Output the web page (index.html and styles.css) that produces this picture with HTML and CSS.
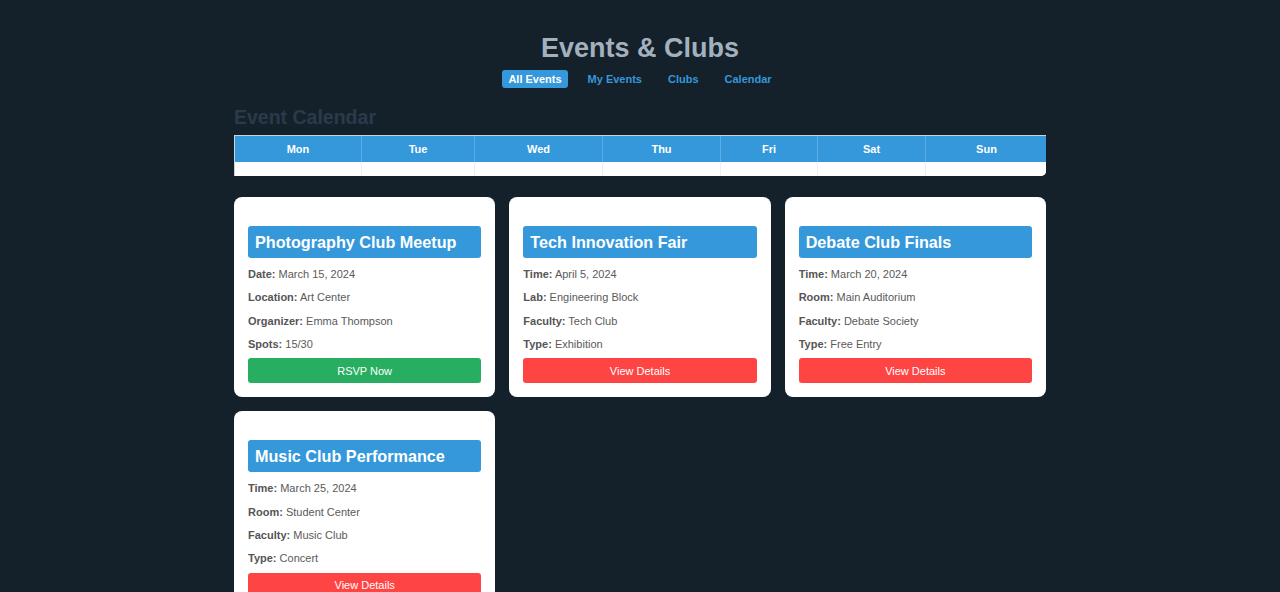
FILE: index.html
```html
<!DOCTYPE html>
<html lang="en">
<head>
<meta charset="utf-8">
<title>Events &amp; Clubs</title>
<link rel="stylesheet" href="styles.css">
</head>
<body>
<div class="page">
  <header class="header">
    <h1 class="title">Events &amp; Clubs</h1>
    <nav class="nav">
      <a class="nav-link active" href="#">All Events</a>
      <a class="nav-link" href="#">My Events</a>
      <a class="nav-link" href="#">Clubs</a>
      <a class="nav-link" href="#">Calendar</a>
    </nav>
  </header>

  <h2 class="section-title">Event Calendar</h2>
  <div class="calendar">
    <div class="cal-head">Mon</div>
    <div class="cal-head">Tue</div>
    <div class="cal-head">Wed</div>
    <div class="cal-head">Thu</div>
    <div class="cal-head">Fri</div>
    <div class="cal-head">Sat</div>
    <div class="cal-head no-sep">Sun</div>
    <div class="cal-cell first"></div>
    <div class="cal-cell"></div>
    <div class="cal-cell"></div>
    <div class="cal-cell"></div>
    <div class="cal-cell"></div>
    <div class="cal-cell"></div>
    <div class="cal-cell no-sep"></div>
  </div>

  <div class="cards">
    <div class="card">
      <h3 class="card-title">Photography Club Meetup</h3>
      <p class="info"><strong>Date:</strong> March 15, 2024</p>
      <p class="info"><strong>Location:</strong> Art Center</p>
      <p class="info"><strong>Organizer:</strong> Emma Thompson</p>
      <p class="info"><strong>Spots:</strong> 15/30</p>
      <button class="btn btn-green">RSVP Now</button>
    </div>
    <div class="card">
      <h3 class="card-title">Tech Innovation Fair</h3>
      <p class="info"><strong>Time:</strong> April 5, 2024</p>
      <p class="info"><strong>Lab:</strong> Engineering Block</p>
      <p class="info"><strong>Faculty:</strong> Tech Club</p>
      <p class="info"><strong>Type:</strong> Exhibition</p>
      <button class="btn btn-red">View Details</button>
    </div>
    <div class="card">
      <h3 class="card-title">Debate Club Finals</h3>
      <p class="info"><strong>Time:</strong> March 20, 2024</p>
      <p class="info"><strong>Room:</strong> Main Auditorium</p>
      <p class="info"><strong>Faculty:</strong> Debate Society</p>
      <p class="info"><strong>Type:</strong> Free Entry</p>
      <button class="btn btn-red">View Details</button>
    </div>
    <div class="card">
      <h3 class="card-title">Music Club Performance</h3>
      <p class="info"><strong>Time:</strong> March 25, 2024</p>
      <p class="info"><strong>Room:</strong> Student Center</p>
      <p class="info"><strong>Faculty:</strong> Music Club</p>
      <p class="info"><strong>Type:</strong> Concert</p>
      <button class="btn btn-red">View Details</button>
    </div>
  </div>
</div>
</body>
</html>
```

FILE: styles.css
```css
* {
  box-sizing: border-box;
}

html, body {
  margin: 0;
  padding: 0;
  background: #15212a;
}

body {
  font-family: "Liberation Sans", Arial, sans-serif;
  color: #555;
}

.page {
  width: 812px;
  margin: 0 auto;
  padding: 34px 0 40px;
}

.header {
  display: flex;
  flex-direction: column;
  align-items: center;
}

.title {
  margin: 0;
  font-size: 27px;
  line-height: 28px;
  font-weight: bold;
  color: #a3b1bf;
}

.nav {
  display: flex;
  gap: 14px;
  margin-top: 8px;
}

.nav-link {
  display: block;
  padding: 3px 6px;
  font-size: 11px;
  line-height: 12px;
  font-weight: bold;
  color: #3498db;
  text-decoration: none;
  border-radius: 3px;
}

.nav-link.active {
  background: #3498db;
  color: #fff;
}

.section-title {
  margin: 18px 0 7px;
  font-size: 19.5px;
  line-height: 22px;
  font-weight: bold;
  color: #2a3a4b;
}

.calendar {
  display: grid;
  grid-template-columns: 127px 113px 128px 118px 97px 108px 121px;
  border-top: 1px solid #c9d3dc;
  border-left: 1px solid #c9d3dc;
  border-radius: 0 0 5px 0;
  overflow: hidden;
  background: #fff;
}

.cal-head {
  height: 26px;
  line-height: 26px;
  text-align: center;
  font-size: 11px;
  font-weight: bold;
  color: #fff;
  background: #3498db;
  border-right: 1px solid #5aaee6;
}

.cal-cell {
  height: 14px;
  background: #fff;
  border-right: 1px solid #eef0f2;
}

.no-sep {
  border-right: none;
}

.cards {
  display: grid;
  grid-template-columns: repeat(3, 1fr);
  gap: 14px;
  margin-top: 21px;
}

.card {
  background: #fff;
  border-radius: 8px;
  padding: 29px 14px 14px;
}

.card-title {
  margin: 0 0 5px;
  padding: 6.5px 7px;
  font-size: 16.2px;
  line-height: 19px;
  font-weight: bold;
  color: #fff;
  background: #3498db;
  border-radius: 3px;
}

.info {
  margin: 0;
  font-size: 11px;
  line-height: 23.33px;
  color: #5a5a5a;
}

.info strong {
  color: #555;
}

.btn {
  display: block;
  width: 100%;
  height: 25px;
  margin-top: 2px;
  border: none;
  border-radius: 3px;
  font-family: "Liberation Sans", Arial, sans-serif;
  font-size: 11px;
  color: #fff;
  cursor: pointer;
}

.btn-green {
  background: #27ae60;
}

.btn-red {
  background: #ff4444;
}
```
